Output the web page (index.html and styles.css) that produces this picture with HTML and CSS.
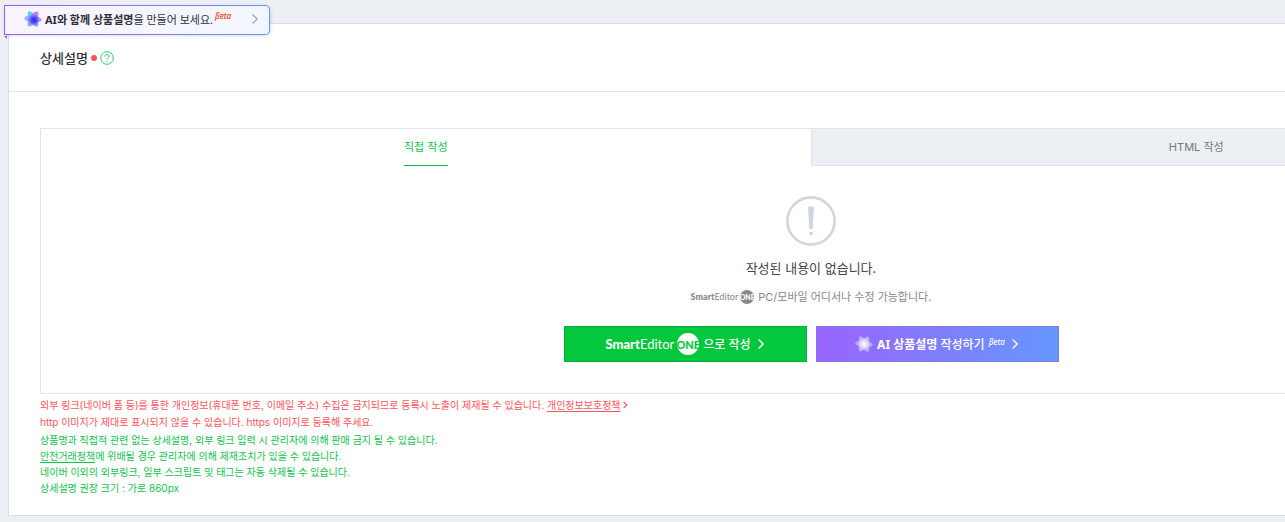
FILE: index.html
```html
<!DOCTYPE html>
<html lang="ko">
<head>
  <meta charset="UTF-8">
  <title>상세설명</title>
  <link rel="stylesheet" href="styles.css">
</head>
<body>
  <svg class="defs" width="0" height="0" aria-hidden="true">
    <defs>
      <linearGradient id="petalColor" x1="0" y1="0" x2="1" y2="0">
        <stop offset="0" stop-color="#7fa0f8"/>
        <stop offset="1" stop-color="#9d86f8"/>
      </linearGradient>
      <linearGradient id="petalCyan" x1="0" y1="0" x2="1" y2="0">
        <stop offset="0" stop-color="#2fd6ee"/>
        <stop offset="1" stop-color="#7f8cf8"/>
      </linearGradient>
      <linearGradient id="petalPurple" x1="0" y1="0" x2="1" y2="0">
        <stop offset="0" stop-color="#6f9cfa"/>
        <stop offset="1" stop-color="#b65cf0"/>
      </linearGradient>
      <radialGradient id="coreColor">
        <stop offset="0" stop-color="#2f22f5"/>
        <stop offset="0.5" stop-color="#4a3cff" stop-opacity="0.8"/>
        <stop offset="1" stop-color="#6c6cff" stop-opacity="0"/>
      </radialGradient>
      <radialGradient id="coreWhite">
        <stop offset="0" stop-color="#fff"/>
        <stop offset="0.5" stop-color="#fff" stop-opacity="0.6"/>
        <stop offset="1" stop-color="#fff" stop-opacity="0"/>
      </radialGradient>
      <symbol id="arrow" viewBox="0 0 8 12">
        <path d="M1.5 1.5L6.2 6l-4.7 4.5" fill="none" stroke="currentColor" stroke-width="1.3"/>
      </symbol>
    </defs>
  </svg>

  <div class="page">
    <button type="button" class="ai-banner">
      <svg class="flower" width="18" height="18" viewBox="0 0 18 18">
        <ellipse cx="9" cy="9" rx="8.8" ry="3.4" transform="rotate(5 9 9)" fill="url(#petalColor)" opacity="0.8"/>
        <ellipse cx="9" cy="9" rx="8.6" ry="3.6" transform="rotate(60 9 9)" fill="url(#petalCyan)" opacity="0.85"/>
        <ellipse cx="9" cy="9" rx="8.6" ry="3.6" transform="rotate(-58 9 9)" fill="url(#petalPurple)" opacity="0.8"/>
        <circle cx="10" cy="10" r="6" fill="url(#coreColor)"/>
      </svg>
      <span class="banner-text"><b>AI와 함께 상품설명</b>을 만들어 보세요.</span>
      <sup class="beta">βeta</sup>
      <svg class="banner-arrow" width="8" height="12"><use href="#arrow"/></svg>
    </button>
    <i class="banner-tail"></i>

    <section class="panel">
      <header class="panel-header">
        <h1>상세설명</h1>
        <i class="required"></i>
        <button type="button" class="help" aria-label="도움말">
          <svg width="14" height="14" viewBox="0 0 14 14" fill="none" stroke="currentColor">
            <circle cx="7" cy="7" r="6.3" stroke-width="0.9"/>
            <path d="M5 5.5c0-1.3.9-2 2-2s2 .7 2 1.8c0 1.4-2 1.5-2 3.2" stroke-width="1"/>
            <path d="M7 9.7v1.1" stroke-width="1.1"/>
          </svg>
        </button>
      </header>

      <div class="panel-body">
        <div class="editor">
          <div class="tabs" role="tablist">
            <button type="button" role="tab" class="tab active" aria-selected="true"><span>직접 작성</span></button>
            <button type="button" role="tab" class="tab" aria-selected="false"><span>HTML 작성</span></button>
          </div>
          <div class="empty">
            <svg class="empty-icon" width="50" height="50" viewBox="0 0 50 50">
              <circle cx="25" cy="25" r="23.6" fill="none" stroke="#d1d5de" stroke-width="2.6"/>
              <path d="M22 10.5h6l-1.3 22.5h-3.4z" fill="#d1d5de"/>
              <rect x="23.2" y="36" width="3.6" height="3" rx="1" fill="#d1d5de"/>
            </svg>
            <p class="empty-title">작성된 내용이 없습니다.</p>
            <p class="empty-desc">
              <span class="logo small"><b>Smart</b>Editor<i>ONE</i></span>
              <span>PC/모바일 어디서나 수정 가능합니다.</span>
            </p>
            <div class="actions">
              <button type="button" class="btn green">
                <span class="logo"><b>Smart</b>Editor<i>ONE</i></span>
                <span class="btn-text">으로 작성</span>
                <svg width="8" height="12"><use href="#arrow"/></svg>
              </button>
              <button type="button" class="btn purple">
                <svg class="flower" width="18" height="18" viewBox="0 0 18 18">
                  <g fill="#fff" opacity="0.4">
                    <ellipse cx="9" cy="9" rx="8.8" ry="3.4" transform="rotate(5 9 9)"/>
                    <ellipse cx="9" cy="9" rx="8.6" ry="3.6" transform="rotate(60 9 9)"/>
                    <ellipse cx="9" cy="9" rx="8.6" ry="3.6" transform="rotate(-58 9 9)"/>
                  </g>
                  <circle cx="9" cy="9" r="6.5" fill="url(#coreWhite)"/>
                </svg>
                <span class="btn-text"><b>AI 상품설명</b> 작성하기</span>
                <sup class="beta">βeta</sup>
                <svg width="8" height="12"><use href="#arrow"/></svg>
              </button>
            </div>
          </div>
        </div>

        <div class="notes warn">
          <p>외부 링크(네이버 폼 등)를 통한 개인정보(휴대폰 번호, 이메일 주소) 수집은 금지되므로 등록시 노출이 제재될 수 있습니다. <a href="#">개인정보보호정책</a>
            <svg width="5" height="8" viewBox="0 0 8 12"><path d="M1 1l5 5-5 5" fill="none" stroke="currentColor" stroke-width="2"/></svg></p>
          <p>http 이미지가 제대로 표시되지 않을 수 있습니다. https 이미지로 등록해 주세요.</p>
        </div>
        <div class="notes info">
          <p>상품명과 직접적 관련 없는 상세설명, 외부 링크 입력 시 관리자에 의해 판매 금지 될 수 있습니다.</p>
          <p><a href="#">안전거래정책</a>에 위배될 경우 관리자에 의해 제재조치가 있을 수 있습니다.</p>
          <p>네이버 이외의 외부링크, 일부 스크립트 및 태그는 자동 삭제될 수 있습니다.</p>
          <p>상세설명 권장 크기 : 가로 860px</p>
        </div>
      </div>
    </section>
  </div>
</body>
</html>
```

FILE: styles.css
```css
* {
  box-sizing: border-box;
}

body {
  margin: 0;
  background: #ecf0f5;
  color: #303038;
  font-family: Inter, 'Noto Sans CJK KR', sans-serif;
  font-size: 11px;
}

h1, p {
  margin: 0;
}

button {
  font-family: inherit;
  cursor: pointer;
}

.defs {
  position: absolute;
}

.page {
  position: relative;
  padding: 23px 0 6px 8px;
  overflow: hidden;
}

/* AI banner */
.ai-banner {
  position: absolute;
  top: 5px;
  left: 4px;
  display: flex;
  align-items: center;
  width: 266px;
  height: 30px;
  padding: 0 10px 2px 19px;
  border: 1px solid transparent;
  border-radius: 0 5px 5px 0;
  background:
    linear-gradient(90deg, #f9f4ff, #f2f7ff) padding-box,
    linear-gradient(90deg, #9b5cf6, #6398fa) border-box;
  box-shadow: 1px 1px 3px rgba(80, 90, 120, 0.2);
  color: #303038;
  font-family: 'Noto Sans', 'Noto Sans CJK KR', sans-serif;
  font-size: 11px;
}

.banner-text {
  margin-left: 3px;
  white-space: nowrap;
}

.banner-tail {
  position: absolute;
  top: 36px;
  left: 4px;
  border-top: 3px solid #9b5cf6;
  border-left: 3px solid transparent;
}

.banner-arrow {
  margin-left: auto;
  color: #b39f98;
}

.beta {
  align-self: flex-start;
  font-family: 'Noto Sans', sans-serif;
  font-size: 8px;
  font-style: italic;
  font-weight: 500;
  line-height: 12px;
}

.ai-banner .beta {
  margin: 4px 0 0 2px;
  color: #f43a10;
}

/* Panel */
.panel {
  min-width: 1606px;
  background: #fff;
  border: 1px solid #dbdde2;
}

.panel-header {
  display: flex;
  align-items: center;
  height: 68px;
  padding-left: 31px;
  border-bottom: 1px solid #e0e3e9;
}

.panel-header h1 {
  font-size: 13px;
  font-weight: 500;
}

.required {
  width: 6px;
  height: 6px;
  margin: 0 3px;
  border-radius: 50%;
  background: #ff545c;
}

.help {
  display: flex;
  padding: 0;
  border: 0;
  background: none;
  color: #1ec757;
}

.panel-body {
  padding: 36px 31px 19px;
}

.editor {
  border: 1px solid #e0e4eb;
}

.tabs {
  display: flex;
  height: 37px;
}

.tab {
  flex: 1;
  padding: 0;
  border: 0;
  border-bottom: 1px solid #e0e4eb;
  border-left: 1px solid #e0e4eb;
  background: #ecf0f5;
  color: #777;
  font-size: 11px;
}

.tab span {
  display: inline-block;
  line-height: 36px;
}

.tab.active {
  border: 0;
  background: #fff;
  color: #11c252;
}

.tab.active span {
  border-bottom: 1px solid #11b24d;
}

.empty {
  display: flex;
  flex-direction: column;
  align-items: center;
  padding: 30px 0 31px;
}

.empty-title {
  margin-top: 12px;
  color: #444;
  font-size: 13px;
  line-height: 20px;
}

.empty-desc {
  display: flex;
  align-items: center;
  gap: 4px;
  margin-top: 10px;
  color: #888;
  font-size: 11px;
  line-height: 18px;
}

.logo {
  display: flex;
  align-items: center;
  font-family: Lato, sans-serif;
  font-size: 13px;
}

.logo b {
  font-weight: 900;
}

.logo i {
  display: flex;
  align-items: center;
  justify-content: center;
  width: 22px;
  height: 22px;
  margin-left: 3px;
  border-radius: 50%;
  background: #fff;
  color: #03c73c;
  font-size: 11px;
  font-style: normal;
  font-weight: 900;
  overflow: hidden;
}

.logo.small {
  font-size: 9px;
}

.logo.small i {
  width: 14px;
  height: 14px;
  margin-left: 2px;
  background: #888;
  color: #fff;
  font-size: 7px;
}

.actions {
  display: flex;
  gap: 9px;
  margin-top: 20px;
}

.btn {
  display: flex;
  align-items: center;
  justify-content: center;
  gap: 4px;
  width: 243px;
  height: 36px;
  padding: 0;
  border: 1px solid #04b037;
  color: #fff;
  font-size: 12px;
  white-space: nowrap;
}

.btn-text {
  font-family: 'Noto Sans', 'Noto Sans CJK KR', sans-serif;
  font-weight: 500;
}

.btn svg:last-child {
  margin-left: 2px;
}

.btn .beta {
  margin-top: 9px;
}

.green {
  background: #03c73c;
}

.purple {
  border-color: #7d78e8;
  background: linear-gradient(100deg, #9a63fd, #6598fd);
}

/* Notes */
.notes {
  font-size: 10px;
  white-space: nowrap;
}

.notes a {
  color: inherit;
  text-underline-offset: 2px;
}

.warn {
  padding-top: 3px;
  color: #ff545c;
  line-height: 17px;
}

.info {
  padding-top: 1px;
  color: #11c252;
  line-height: 16px;
}
```
